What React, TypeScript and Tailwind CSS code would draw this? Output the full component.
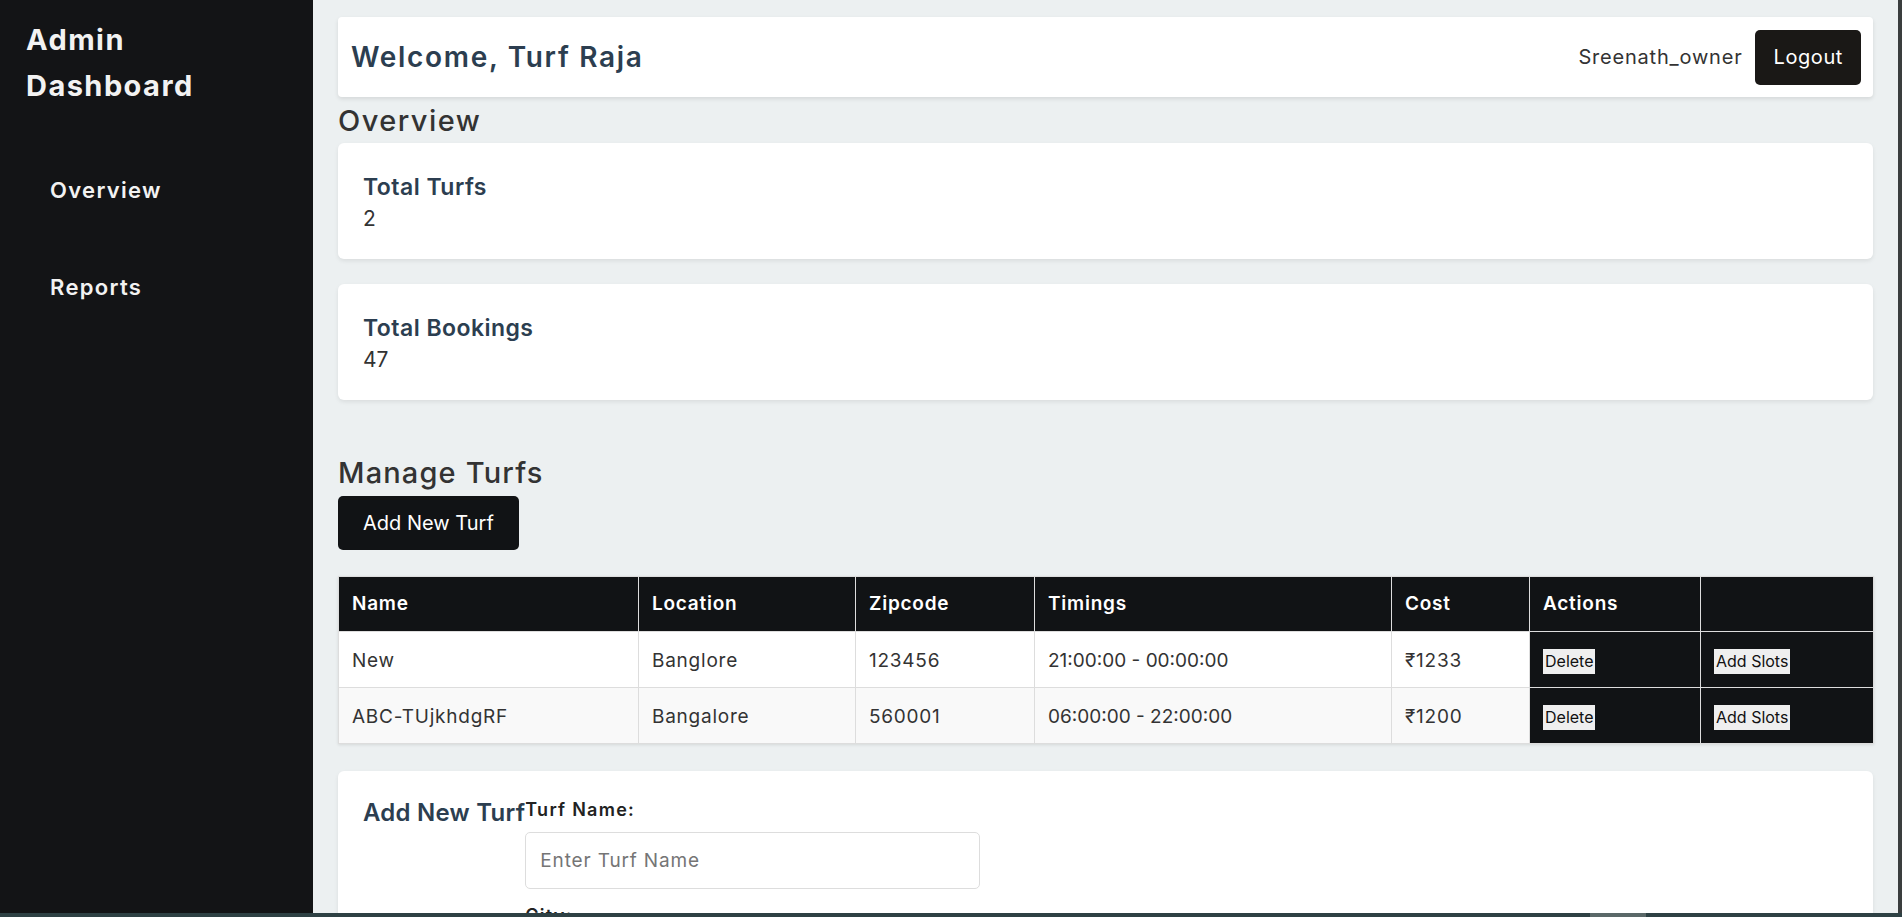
import React from "react";

const turfs = [
  { name: "New", location: "Banglore", zip: "123456", timings: "21:00:00 - 00:00:00", cost: "₹1233" },
  { name: "ABC-TUjkhdgRF", location: "Bangalore", zip: "560001", timings: "06:00:00 - 22:00:00", cost: "₹1200" },
];

const stats = [
  { label: "Total Turfs", value: "2" },
  { label: "Total Bookings", value: "47" },
];

const fields = [
  { label: "Turf Name:", placeholder: "Enter Turf Name" },
  { label: "City:", placeholder: "Enter City" },
  { label: "Zipcode:", placeholder: "Enter Zipcode" },
];

export default function App() {
  return (
    <div className="h-[917px] w-full flex flex-col overflow-hidden font-['Inter',sans-serif]">
      <div className="flex flex-1 min-h-0">
        {/* sidebar */}
        <aside className="w-[313px] shrink-0 bg-[#131416] pt-[17px] px-[26px]">
          <h2 className="max-w-[200px] text-[29px] leading-[46px] font-bold tracking-[0.05em] text-[#f2f2f2]">
            Admin Dashboard
          </h2>
          <ul className="mt-[66px] pl-[24px] flex flex-col gap-[67px]">
            <li className="text-[22px] leading-[30px] font-semibold tracking-[0.06em] text-[#f2f2f2]">Overview</li>
            <li className="text-[22px] leading-[30px] font-semibold tracking-[0.06em] text-[#f2f2f2]">Reports</li>
          </ul>
        </aside>

        {/* main */}
        <main className="flex-1 min-w-0 bg-[#ecf0f1] px-[25px] pt-[17px] overflow-hidden">
          <header className="h-[80px] bg-white rounded-sm shadow-[0_2px_4px_rgba(0,0,0,0.1)] flex items-center justify-between pl-[13px] pr-[12px]">
            <h1 className="text-[28px] font-semibold tracking-[0.06em] text-[#2c3e50]">Welcome, Turf Raja</h1>
            <div className="flex items-center gap-[13px]">
              <span className="text-[20px] tracking-[0.04em] text-[#333]">Sreenath_owner</span>
              <button className="h-[55px] px-[18px] rounded-[5px] bg-[#1a1816] text-white text-[20px] tracking-[0.03em]">
                Logout
              </button>
            </div>
          </header>

          <h2 className="mt-[7px] text-[29px] leading-[34px] font-medium tracking-[0.05em] text-[#333]">Overview</h2>
          <div className="mt-[5px] flex flex-col gap-[25px]">
            {stats.map((s) => (
              <div
                key={s.label}
                className="h-[116px] bg-white rounded-md shadow-[0_2px_4px_rgba(0,0,0,0.08)] px-[25px] pt-[25px]"
              >
                <h3 className="text-[23px] leading-[38px] font-semibold tracking-[0.02em] text-[#2c3e50]">{s.label}</h3>
                <p className="text-[21px] leading-[26px] text-[#333]">{s.value}</p>
              </div>
            ))}
          </div>

          <h2 className="mt-[56px] text-[29px] leading-[34px] font-medium tracking-[0.04em] text-[#333]">Manage Turfs</h2>
          <button className="mt-[6px] h-[54px] px-[25px] rounded-[5px] bg-[#111315] text-white text-[20px]">
            Add New Turf
          </button>

          <table className="mt-[26px] w-full table-fixed border-collapse shadow-[0_1px_3px_rgba(0,0,0,0.1)] text-[19px]">
            <thead>
              <tr className="h-[55px] bg-[#111315] text-white tracking-[0.04em]">
                <th className="w-[300px] border border-[#ddd] pl-[13px] text-left font-semibold">Name</th>
                <th className="w-[217px] border border-[#ddd] pl-[13px] text-left font-semibold">Location</th>
                <th className="w-[179px] border border-[#ddd] pl-[13px] text-left font-semibold">Zipcode</th>
                <th className="w-[357px] border border-[#ddd] pl-[13px] text-left font-semibold">Timings</th>
                <th className="w-[138px] border border-[#ddd] pl-[13px] text-left font-semibold">Cost</th>
                <th className="w-[171px] border border-[#ddd] pl-[13px] text-left font-semibold">Actions</th>
                <th className="w-[173px] border border-[#ddd]"></th>
              </tr>
            </thead>
            <tbody>
              {turfs.map((t, i) => (
                <tr key={t.name} className={`h-[56px] text-[#333] tracking-[0.04em] ${i % 2 === 1 ? "bg-[#f9f9f9]" : "bg-white"}`}>
                  <td className="border border-[#ddd] pl-[13px] pt-[3px]">{t.name}</td>
                  <td className="border border-[#ddd] pl-[13px] pt-[3px]">{t.location}</td>
                  <td className="border border-[#ddd] pl-[13px] pt-[3px]">{t.zip}</td>
                  <td className="border border-[#ddd] pl-[13px] pt-[3px] tracking-normal">{t.timings}</td>
                  <td className="border border-[#ddd] pl-[13px] pt-[3px]">{t.cost}</td>
                  <td className="border border-[#ddd] pl-[13px] pt-[3px] bg-[#111315]">
                    <button className="h-[25px] px-[2px] bg-[#efefef] text-[#111] text-[16px] leading-[25px] tracking-normal">Delete</button>
                  </td>
                  <td className="border border-[#ddd] pl-[13px] pt-[3px] bg-[#111315]">
                    <button className="h-[25px] px-[2px] bg-[#efefef] text-[#111] text-[16px] leading-[25px] tracking-normal">Add Slots</button>
                  </td>
                </tr>
              ))}
            </tbody>
          </table>

          <div className="mt-[27px] bg-white rounded-md shadow-[0_2px_4px_rgba(0,0,0,0.08)] p-[25px] flex">
            <h3 className="text-[24px] leading-[34px] font-semibold tracking-[0.01em] text-[#2c3e50]">Add New Turf</h3>
            <form className="flex flex-col">
              {fields.map((f, i) => (
                <div key={f.label} className={i === 0 ? "" : "mt-[13px]"}>
                  <label className="block text-[18px] leading-[28px] font-semibold tracking-[0.07em] text-[#222]">{f.label}</label>
                  <input
                    placeholder={f.placeholder}
                    className="mt-[8px] h-[57px] w-[455px] rounded-[5px] border border-[#ddd] px-[14px] text-[19px] tracking-[0.045em] placeholder:text-[#757575]"
                  />
                </div>
              ))}
            </form>
          </div>
        </main>

        {/* vertical scrollbar edge */}
        <div className="w-[4px] shrink-0 bg-[#3a3d3e]" />
      </div>

      {/* horizontal scrollbar */}
      <div className="h-[4px] shrink-0 flex bg-[#2e4144]">
        <div className="w-[1590px]" />
        <div className="w-[56px] bg-[#5a6868]" />
      </div>
    </div>
  );
}
